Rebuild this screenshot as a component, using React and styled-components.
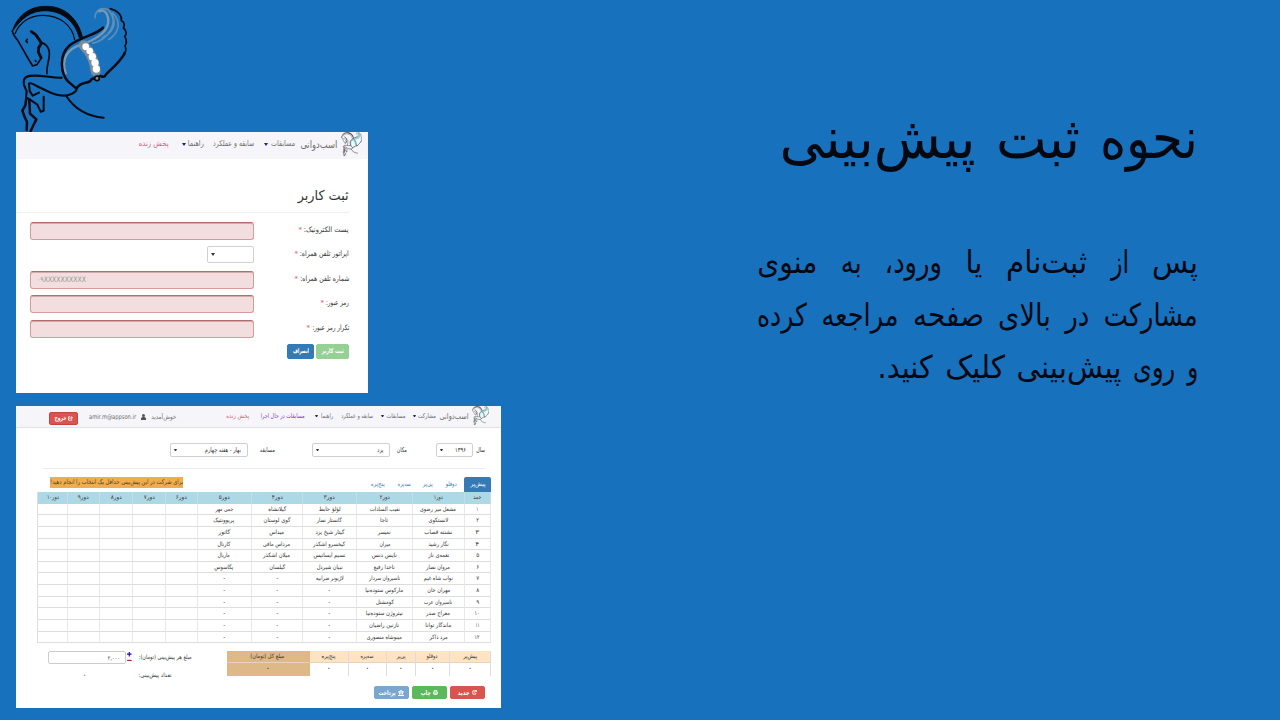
import React, { useLayoutEffect, useRef, useState } from "react";
import styled, { createGlobalStyle } from "styled-components";

const Global = createGlobalStyle`
  * { box-sizing: border-box; }
  body { margin: 0; background: #1771bd; font-family: "DejaVu Sans", sans-serif; }
`;

const FitBox = styled.span`
  display: block;
  flex: none;
  width: ${(p) => p.$w}px;
  white-space: nowrap;
`;
const FitInner = styled.span`
  display: inline-block;
  transform-origin: ${(p) => (p.$ltr ? "left" : "right")} center;
`;

/* Sets a run of text to a fixed measure by condensing or widening it. */
function Fit({ w, ltr, children }) {
  const ref = useRef(null);
  const [k, setK] = useState(1);
  useLayoutEffect(() => {
    if (ref.current.offsetWidth) {
      const box = getComputedStyle(ref.current);
      setK(w / parseFloat(box.width));
    }
  }, [w, children]);
  return (
    <FitBox $w={w} dir={ltr ? "ltr" : "rtl"}>
      <FitInner ref={ref} $ltr={ltr} style={{ transform: `scaleX(${k})` }}>{children}</FitInner>
    </FitBox>
  );
}

const Slide = styled.main`
  display: grid;
  grid-template-columns: 501px 1fr;
  width: 1280px;
  height: 720px;
  overflow: hidden;
  background: #1771bd;
`;
const Shots = styled.section`
  display: flex;
  flex-direction: column;
  align-items: flex-start;
`;
const LogoArea = styled.div`
  height: 132px;
  svg { display: block; }
`;
const Copy = styled.section`
  display: flex;
  flex-direction: column;
  align-items: flex-start;
  padding: 106px 82px 0 0;
  color: #040811;
`;
const Title = styled.h1`
  display: flex;
  justify-content: space-between;
  width: 418px;
  height: 72px;
  margin: 0 0 59px;
  font-size: 57px;
  font-weight: 400;
  line-height: 64px;
`;
const Line = styled.p`
  display: flex;
  justify-content: space-between;
  width: ${(p) => p.$w}px;
  height: 52.7px;
  margin: 0;
  font-size: 31.5px;
  line-height: 51px;
`;

const Panel = styled.article`
  display: flex;
  flex-direction: column;
  width: ${(p) => p.$w}px;
  height: ${(p) => p.$h}px;
  margin: 0 0 13px 16px;
  background: #fff;
  overflow: hidden;
  color: #363636;
`;
const Nav = styled.nav`
  display: flex;
  align-items: center;
  height: ${(p) => p.$h}px;
  padding-right: ${(p) => p.$pad}px;
  padding-bottom: 2px;
  background: #f6f6fa;
  border-bottom: 1px solid ${(p) => p.$line};
  font-size: ${(p) => p.$size}px;
  line-height: 12px;
  color: #6e6e6e;
`;
const NavItem = styled.span`
  display: flex;
  align-items: center;
  margin-right: ${(p) => p.$gap}px;
  margin-top: ${(p) => p.$drop || 0}px;
  color: ${(p) => p.$color || "inherit"};
  font-size: ${(p) => (p.$size ? p.$size + "px" : "inherit")};
`;
const Caret = styled.i`
  flex: none;
  width: ${(p) => p.$s || 4}px;
  margin-right: ${(p) => p.$gap || 0}px;
  border: ${(p) => (p.$s || 4) / 2}px solid transparent;
  border-top: ${(p) => (p.$s || 4) * 0.75}px solid ${(p) => p.$color || "#1414c8"};
  border-bottom: 0;
`;

const FormBody = styled.div`
  padding: 26px 19px 0 14px;
`;
const FormTitle = styled.h2`
  height: 28px;
  margin: 0 0 0 -14px;
  border-bottom: 1px solid #f0f0f0;
  font-size: 13.5px;
  font-weight: 400;
  line-height: 20px;
  color: #333;
`;
const Fields = styled.div`
  display: grid;
  grid-auto-rows: 24.4px;
  margin-top: 9px;
`;
const FieldRow = styled.label`
  display: grid;
  grid-template-columns: 95px 224px;
  align-items: start;
  font-size: 7.5px;
  line-height: 16px;
`;
const LabelText = styled.span`
  display: flex;
  gap: 2px;
`;
const Star = styled.b`
  width: 4px;
  color: #f04b55;
  font-size: 7px;
  font-weight: 400;
`;
const Input = styled.span`
  display: flex;
  align-items: center;
  direction: ltr;
  width: 224px;
  height: 18px;
  padding-left: 6px;
  background: #f2dede;
  border: 1px solid #d69a9c;
  border-top-color: #b66b6d;
  border-radius: 3px;
  box-shadow: inset 0 1px 0 #d3aaaa;
  color: #999;
`;
const Select = styled.span`
  display: flex;
  align-items: center;
  justify-content: space-between;
  width: ${(p) => p.$w}px;
  height: ${(p) => p.$h}px;
  margin-right: ${(p) => p.$gap || 0}px;
  padding: 0 ${(p) => p.$pad || 6}px 0 3px;
  border: 1px solid #d0d0d0;
  border-radius: 2px;
  color: #333;
`;
const Buttons = styled.div`
  display: flex;
  gap: ${(p) => p.$gap}px;
`;
const Button = styled.span`
  display: flex;
  align-items: center;
  justify-content: center;
  gap: 2px;
  width: ${(p) => p.$w}px;
  height: ${(p) => p.$h}px;
  background: ${(p) => p.$bg};
  border: 1px solid ${(p) => p.$edge || p.$bg};
  border-radius: 2px;
  color: #fff;
  font-size: 6.5px;
  font-weight: 700;
  line-height: 10px;
`;

const Account = styled.span`
  display: flex;
  align-items: center;
  margin-top: 3px;
  margin-right: 50px;
  gap: 5px;
`;
const Filters = styled.div`
  display: flex;
  align-items: center;
  height: 41px;
  margin: 0 16px 0 27px;
  padding-top: 4px;
  border-bottom: 1px solid #ebebeb;
  font-size: 6.5px;
  line-height: 12px;
`;
const FilterLabel = styled.span`
  margin-right: ${(p) => p.$gap || 0}px;
`;
const Tabs = styled.div`
  display: flex;
  height: 15px;
  margin: 8px 10px 0 22px;
  font-size: 6.5px;
  line-height: 14px;
  color: #457fb4;
`;
const ActiveTab = styled.span`
  display: flex;
  justify-content: center;
  width: 27px;
  background: #337ab7;
  border-radius: 2px 2px 0 0;
  color: #fff;
`;
const Tab = styled.span`
  margin-right: ${(p) => p.$gap}px;
`;
const Warning = styled.span`
  height: 11px;
  margin-right: 188px;
  background: #f0ad4e;
  color: #54421f;
  line-height: 10px;
`;
const Table = styled.div`
  display: grid;
  grid-template-columns: 26.5px 51.5px 56px 54px 51.5px 53.5px 32px 32.7px 33.3px 32px 30px;
  grid-auto-rows: 11.65px;
  width: 454px;
  margin-right: 10px;
  border-left: 1px solid #ddd;
  font-size: 6px;
  line-height: 9px;
`;
const Cell = styled.span`
  display: flex;
  justify-content: center;
  border-right: 1px solid ${(p) => (p.$head ? "#bfe0e8" : "#e8e8e8")};
  border-bottom: 1px solid ${(p) => (p.$head ? "#add8e6" : "#ddd")};
  background: ${(p) => (p.$head ? "#add8e6" : "#fff")};
`;
const Bottom = styled.div`
  display: flex;
  align-items: flex-start;
  height: 35px;
  margin: 8px 10px 0 0;
  font-size: 6px;
  line-height: 10px;
`;
const Totals = styled.div`
  display: grid;
  grid-template-columns: 41px 34px 29.5px 37.5px 39.5px 82.5px;
  grid-template-rows: 12px 12.5px;
`;
const TotalCell = styled.span`
  display: flex;
  justify-content: center;
  background: ${(p) => (p.$sum ? "#deb887" : p.$head ? "#ffe4c4" : "#fff")};
  border-right: 1px solid ${(p) => (p.$sum ? "#deb887" : "#ddd")};
  border-bottom: ${(p) => (p.$head ? 1 : 0)}px solid #e5d3bf;
  font-weight: ${(p) => (p.$head ? 400 : 700)};
`;
const Amounts = styled.div`
  display: grid;
  grid-template-columns: 57px 86px;
  grid-template-rows: 17.5px 14px;
  margin-right: 35.5px;
  line-height: 12px;
`;
const Stepper = styled.span`
  display: flex;
  width: 86px;
  height: 13px;
  margin-right: 3px;
`;
const StepButtons = styled.svg`
  flex: none;
  width: 6px;
  height: 13px;
`;
const Amount = styled.span`
  width: 78px;
  padding-right: 5px;
  border: 1px solid #ccc;
  border-radius: 2px;
`;
const CountLabel = styled.span`
  padding-right: 20px;
`;
const Count = styled.span`
  padding-right: 48px;
  color: #8757cf;
  font-weight: 700;
`;
const Actions = styled.div`
  display: flex;
  gap: 3px;
  margin-right: 16px;
`;

function Horse({ w, h, light }) {
  const ink = light ? "#454b50" : "#030a12";
  const wing = light ? "#67bfc8" : "#7898b4";
  const m = light ? 2 : 1.25;
  return (
    <svg width={w} height={h} viewBox={light ? "30 14 356 384" : "0 0 420 396"} preserveAspectRatio="none" fill="none" strokeLinecap="round" strokeLinejoin="round" stroke={ink}>
      <path d="M37 94C50 51 85 19 137 19C198 18 235 60 247 111L238 113C226 69 192 34 138 32C91 31 63 57 37 94Z" fill={ink} strokeWidth="3" />
      <path d="M45 101C59 67 89 46 129 46C180 47 216 75 224 119" strokeWidth={3 * m} />
      <path d="M37 93C39 108 49 114 55 124L87 180L98 198L111 194L124 174" strokeWidth={4 * m} />
      <path d="M94 95L107 104L119 121L124 130L116 143L115 156L123 173" strokeWidth={7 * m} />
      <path d="M123 127C145 134 151 151 147 174C143 195 139 207 141 221" strokeWidth={4 * m} />
      <path d="M78 123L82 118M79 124L82 127M106 182L108 184" strokeWidth={4 * m} />
      <path d="M185 233C147 234 102 219 79 231C72 235 69 240 72 255L80 274L78 292L92 300L112 314L122 335L131 332L131 290" strokeWidth={5 * m} />
      <path d="M117 278L98 287L89 273L87 251C91 245 101 254 116 261C145 274 173 293 205 285C222 281 231 272 230 265" strokeWidth={5 * m} />
      <path d="M79 294L76 316L67 332L74 351L81 366L80 390M88 299L90 341L109 358L99 378L92 393" strokeWidth={6 * m} />
      <path d="M199 288C222 326 263 350 311 353" strokeWidth={5 * m} />
      <path d="M197 220C182 176 202 147 244 134C293 117 327 94 325 59C322 37 312 27 298 34" stroke={wing} strokeWidth={6 * m} />
      <path d="M285 53C286 23 318 17 332 39C354 73 323 119 278 130M324 29C350 55 352 91 307 113M338 39C366 67 356 100 326 119" stroke={wing} strokeWidth={light ? 10 : 5} strokeOpacity={light ? 1 : 0.75} />
      <path d="M309 83C290 105 238 111 207 138C176 166 182 220 204 244L229 266C241 244 261 252 271 243C278 228 285 241 291 234C301 220 303 234 314 229C326 210 352 198 374 160" strokeWidth={6 * m} />
      <path d="M331 26C353 31 367 47 364 62C375 66 374 78 370 84C380 91 381 103 374 109C382 123 379 132 375 137C380 149 377 158 371 160" strokeWidth={4 * m} />
      <path d="M251 136C273 157 284 184 287 214" stroke={light ? wing : "#7c8c98"} strokeWidth="30" />
      {!light && (
        <g fill="#fff" stroke="none">
          <circle cx="257" cy="140" r="10" /><circle cx="269" cy="153" r="10" />
          <circle cx="277" cy="170" r="11" /><circle cx="285" cy="188" r="11" />
          <circle cx="289" cy="207" r="11" />
        </g>
      )}
      <circle cx="291" cy="235" r="7" strokeWidth="5" fill={light ? "none" : "#8c8c88"} />
    </svg>
  );
}

const Glyph = ({ d, s = 6, color = "#fff" }) => (
  <svg width={s} height={s} viewBox="0 0 12 12" fill="none" stroke={color} strokeWidth="2"><path d={d} /></svg>
);
const icons = {
  exit: "M5 2H1V10H9V8M4 7C4 4 7 4 10 4M8 1L11 4L8 7",
  renew: "M8 2H2V10H9V7M5 6L10 2M7 1H11V5",
  print: "M3 5V1H9V5M1 5H11V9H1ZM3 9V11H9V9",
  bank: "M1 4L6 1L11 4ZM3 5V9M6 5V9M9 5V9M0 11H12",
};
const UserGlyph = () => (
  <svg width="5" height="6" viewBox="0 0 10 12" fill="#555"><circle cx="5" cy="3" r="3" /><path d="M0 12V8L3 6H7L10 8V12Z" /></svg>
);

const headers = [["خمد", 8], ["دور۱", 9], ["دور۲", 10], ["دور۳", 11], ["دور۴", 11], ["دور۵", 11], ["دور۶", 11], ["دور۷", 11], ["دور۸", 11], ["دور۹", 11], ["دور۱۰", 12]];
const dash = ["-", 2];
const rows = [
  [["۱", 2], ["مشعل میر رضوی", 36], ["نقیب السادات", 30], ["لؤلؤ حابط", 22], ["گیلانشاه", 18], ["جمی مهر", 18]],
  [["۲", 3], ["لانستکوی", 20], ["تاجا", 8], ["گانستار نصار", 25], ["گوی لوستان", 27], ["پریوونتیک", 21]],
  [["۳", 4], ["نشنته قصاب", 28], ["نمیسر", 13], ["گیتار شیخ یزد", 29], ["میداس", 15], ["گاتور", 12]],
  [["۴", 4], ["نگار رشید", 20], ["میران", 11], ["کیخسرو اشکذر", 32], ["مرداس مافی", 27], ["کارنال", 13]],
  [["۵", 3], ["نغمه‌ی ناز", 21], ["نایس دنس", 25], ["نسیم ایساتیس", 32], ["میلان اشکذر", 27], ["ماریال", 12]],
  [["۶", 3], ["مروان نصار", 24], ["ناخدا رفیع", 21], ["نبیان شیردل", 26], ["گیلسان", 16], ["پگاسوس", 19]],
  [["۷", 3], ["نواب شاه غیم", 29], ["ناسیروان سردار", 31], ["لاژیونر ضرابیه", 28], dash, dash],
  [["۸", 3], ["مهران خان", 23], ["مارکوس ستوده‌نیا", 38], dash, dash, dash],
  [["۹", 3], ["ناسیروان عرب", 28], ["کومشتل", 18], dash, dash, dash],
  [["۱۰", 5], ["معراج صدر", 24], ["نیتروژن ستوده‌نیا", 37], dash, dash, dash],
  [["۱۱", 4], ["ماندگار توانا", 26], ["نازنین راضیان", 30], dash, dash, dash],
  [["۱۲", 5], ["مرد ذاکر", 18], ["مینوشاه منصوری", 35], dash, dash, dash],
];
const totals = [["پیش‌پر", 14], ["دوقلو", 11], ["پی‌پر", 9], ["سه‌پره", 13], ["پنج‌پره", 14], ["مبلغ کل (تومان)", 34]];
const lines = [
  { w: 441, words: [["پس", 46], ["از", 18], ["ثبت‌نام", 81], ["یا", 17], ["ورود،", 57], ["به", 21], ["منوی", 60]] },
  { w: 441, words: [["مشارکت", 94], ["در", 24], ["بالای", 53], ["صفحه", 71], ["مراجعه", 77], ["کرده", 50]] },
  { w: 320, words: [["و", 11], ["روی", 42], ["پیش‌بینی", 105], ["کلیک", 60], ["کنید.", 55]] },
];
const fields = [
  { label: "پست الکترونیک:", w: 45 },
  { label: "اپراتور تلفن همراه:", w: 49, select: true },
  { label: "شماره تلفن همراه:", w: 49, hint: "۰۹XXXXXXXXXX" },
  { label: "رمز عبور:", w: 23 },
  { label: "تکرار رمز عبور:", w: 37 },
];

function SignUp() {
  return (
    <Panel $w={352} $h={261} dir="rtl">
      <Nav $h={27} $pad={6} $size={8} $line="#f6f6fa">
        <Horse w={21} h={24} light />
        <NavItem $gap={4} $size={10.5}><Fit w={37}>اسب‌دوانی</Fit></NavItem>
        <NavItem $gap={5}><Fit w={24}>مسابقات</Fit><Caret $gap={3} /></NavItem>
        <NavItem $gap={10}><Fit w={41}>سابقه و عملکرد</Fit></NavItem>
        <NavItem $gap={9}><Fit w={16}>راهنما</Fit><Caret $gap={2} /></NavItem>
        <NavItem $gap={13} $color="#d65b7c"><Fit w={30}>پخش زنده</Fit></NavItem>
      </Nav>
      <FormBody>
        <FormTitle><Fit w={51}>ثبت کاربر</Fit></FormTitle>
        <Fields>
          {fields.map((f) => (
            <FieldRow key={f.label}>
              <LabelText><Fit w={f.w}>{f.label}</Fit><Star>*</Star></LabelText>
              {f.select ? (
                <Select $w={47} $h={17}><span /><Caret $color="#333" /></Select>
              ) : (
                <Input>{f.hint && <Fit w={49} ltr>{f.hint}</Fit>}</Input>
              )}
            </FieldRow>
          ))}
        </Fields>
        <Buttons $gap={2}>
          <Button $w={33} $h={15} $bg="#95d195"><Fit w={22}>ثبت کاربر</Fit></Button>
          <Button $w={27} $h={15} $bg="#337ab7"><Fit w={16}>انصراف</Fit></Button>
        </Buttons>
      </FormBody>
    </Panel>
  );
}

function Prediction() {
  return (
    <Panel $w={485} $h={302} dir="rtl">
      <Nav $h={22} $pad={12} $size={6.5} $line="#e2e2e6">
        <Horse w={17} h={19} light />
        <NavItem $gap={3} $size={8.5}><Fit w={29}>اسب‌دوانی</Fit></NavItem>
        <NavItem $gap={4}><Fit w={18}>مشارکت</Fit><Caret $gap={2} $s={3} /></NavItem>
        <NavItem $gap={8}><Fit w={19}>مسابقات</Fit><Caret $gap={2} $s={3} /></NavItem>
        <NavItem $gap={8}><Fit w={32}>سابقه و عملکرد</Fit></NavItem>
        <NavItem $gap={8}><Fit w={12}>راهنما</Fit><Caret $gap={3} $s={3} /></NavItem>
        <NavItem $gap={10} $color="#8040bd"><Fit w={44}>مسابقات در حال اجرا</Fit></NavItem>
        <NavItem $gap={12} $color="#d65b7c"><Fit w={23}>پخش زنده</Fit></NavItem>
        <Account>
          <Fit w={25}>خوش‌آمدید</Fit>
          <UserGlyph />
          <Fit w={47} ltr>amir.m@appson.ir</Fit>
        </Account>
        <NavItem $gap={11} $drop={5}>
          <Button $w={29} $h={13} $bg="#d9534f" $edge="#c9433f"><Glyph d={icons.exit} s={5} /><Fit w={12}>خروج</Fit></Button>
        </NavItem>
      </Nav>
      <Filters>
        <Fit w={9}>سال</Fit>
        <Select $w={37} $h={14} $gap={3}><Fit w={11}>۱۳۹۶</Fit><Caret $s={3} $color="#333" /></Select>
        <FilterLabel $gap={29}><Fit w={10}>مکان</Fit></FilterLabel>
        <Select $w={78} $h={14} $gap={7}><Fit w={6}>یزد</Fit><Caret $s={3} $color="#333" /></Select>
        <FilterLabel $gap={37}><Fit w={15}>مسابقه</Fit></FilterLabel>
        <Select $w={78} $h={14} $gap={12}><Fit w={36}>بهار - هفته چهارم</Fit><Caret $s={3} $color="#333" /></Select>
      </Filters>
      <Tabs>
        <ActiveTab><Fit w={15}>پیش‌پر</Fit></ActiveTab>
        <Tab $gap={7}><Fit w={11}>دوقلو</Fit></Tab>
        <Tab $gap={13}><Fit w={10}>پی‌پر</Fit></Tab>
        <Tab $gap={12}><Fit w={13}>سه‌پره</Fit></Tab>
        <Tab $gap={13}><Fit w={14}>پنج‌پره</Fit></Tab>
        <Warning><Fit w={133}>برای شرکت در این پیش‌بینی حداقل یک انتخاب را انجام دهید!</Fit></Warning>
      </Tabs>
      <Table>
        {headers.map(([t, w]) => <Cell key={t} $head><Fit w={w}>{t}</Fit></Cell>)}
        {rows.map((row, r) =>
          headers.map((_, c) => <Cell key={r + "-" + c}>{row[c] && <Fit w={row[c][1]}>{row[c][0]}</Fit>}</Cell>)
        )}
      </Table>
      <Bottom>
        <Totals>
          {totals.map(([t, w], i) => <TotalCell key={t} $head $sum={i === 5}><Fit w={w}>{t}</Fit></TotalCell>)}
          {totals.map(([t], i) => <TotalCell key={t} $sum={i === 5}>۰</TotalCell>)}
        </Totals>
        <Amounts>
          <Fit w={53}>مبلغ هر پیش‌بینی (تومان):</Fit>
          <Stepper>
            <StepButtons viewBox="0 0 6 13" fill="none">
              <path d="M1 3.2H5.6M3.3 1V5.4" stroke="#1212b8" strokeWidth="1.2" />
              <path d="M1 9.4H5.6" stroke="#bd2636" strokeWidth="1.2" />
            </StepButtons>
            <Amount><Fit w={12}>۲,۰۰۰</Fit></Amount>
          </Stepper>
          <CountLabel><Fit w={33}>تعداد پیش‌بینی:</Fit></CountLabel>
          <Count>۰</Count>
        </Amounts>
      </Bottom>
      <Actions>
        <Button $w={35} $h={13} $bg="#d9534f"><Glyph d={icons.renew} s={5} /><Fit w={12}>جدید</Fit></Button>
        <Button $w={35} $h={13} $bg="#5cb85c"><Glyph d={icons.print} s={5} /><Fit w={10}>چاپ</Fit></Button>
        <Button $w={35} $h={13} $bg="#7aa7cf"><Glyph d={icons.bank} /><Fit w={17}>پرداخت</Fit></Button>
      </Actions>
    </Panel>
  );
}

export default function App() {
  return (
    <>
      <Global />
      <Slide>
        <Shots>
          <LogoArea><Horse w={140} h={132} /></LogoArea>
          <SignUp />
          <Prediction />
        </Shots>
        <Copy dir="rtl">
          <Title><Fit w={98}>نحوه</Fit><Fit w={84}>ثبت</Fit><Fit w={196}>پیش‌بینی</Fit></Title>
          {lines.map((l, i) => (
            <Line key={i} $w={l.w}>{l.words.map(([t, w]) => <Fit key={t} w={w}>{t}</Fit>)}</Line>
          ))}
        </Copy>
      </Slide>
    </>
  );
}
